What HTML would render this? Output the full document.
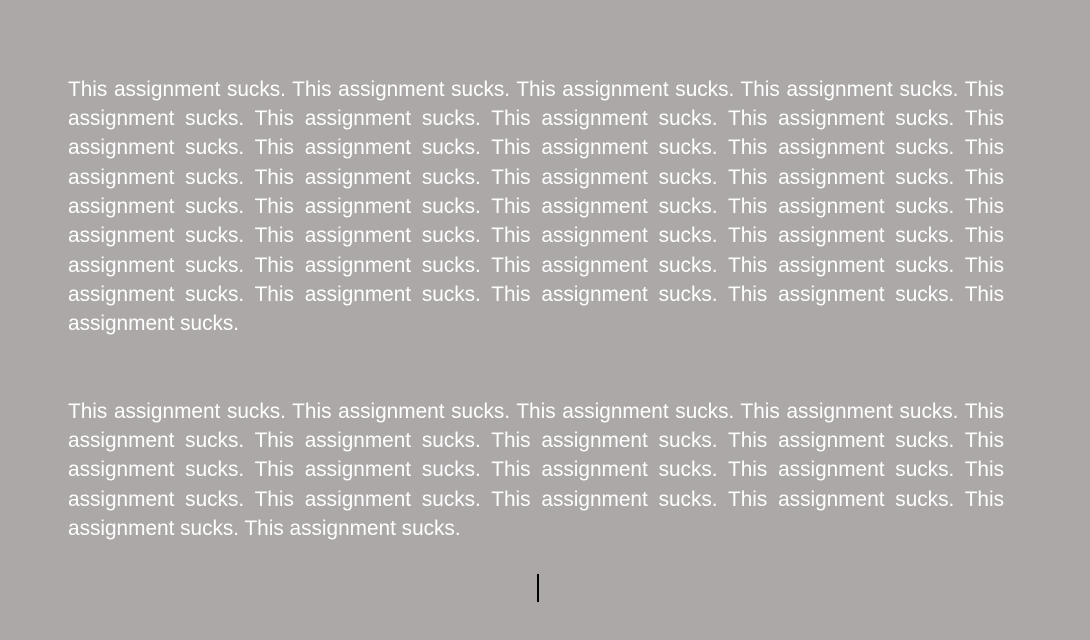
<!DOCTYPE html>
<html><head><meta charset="utf-8"><style>
html,body{margin:0;padding:0;}
body{width:1090px;height:640px;background:#aca8a7;position:relative;overflow:hidden;font-family:"Liberation Sans",sans-serif;color:#fff;font-size:20.8px;}
.l{position:absolute;left:68px;width:936px;text-align:justify;text-align-last:justify;white-space:nowrap;height:24px;line-height:24px;}
.l.e{text-align-last:left;text-align:left;}
.cur{position:absolute;left:537px;top:574px;width:1.5px;height:28px;background:#000;}
</style></head><body>
<div class="l" style="top:78px">This assignment sucks. This assignment sucks. This assignment sucks. This assignment sucks. This</div>
<div class="l" style="top:107px">assignment sucks. This assignment sucks. This assignment sucks. This assignment sucks. This</div>
<div class="l" style="top:136px">assignment sucks. This assignment sucks. This assignment sucks. This assignment sucks. This</div>
<div class="l" style="top:166px">assignment sucks. This assignment sucks. This assignment sucks. This assignment sucks. This</div>
<div class="l" style="top:195px">assignment sucks. This assignment sucks. This assignment sucks. This assignment sucks. This</div>
<div class="l" style="top:224px">assignment sucks. This assignment sucks. This assignment sucks. This assignment sucks. This</div>
<div class="l" style="top:254px">assignment sucks. This assignment sucks. This assignment sucks. This assignment sucks. This</div>
<div class="l" style="top:283px">assignment sucks. This assignment sucks. This assignment sucks. This assignment sucks. This</div>
<div class="l e" style="top:312px">assignment sucks.</div>
<div class="l" style="top:400px">This assignment sucks. This assignment sucks. This assignment sucks. This assignment sucks. This</div>
<div class="l" style="top:429px">assignment sucks. This assignment sucks. This assignment sucks. This assignment sucks. This</div>
<div class="l" style="top:458px">assignment sucks. This assignment sucks. This assignment sucks. This assignment sucks. This</div>
<div class="l" style="top:488px">assignment sucks. This assignment sucks. This assignment sucks. This assignment sucks. This</div>
<div class="l e" style="top:517px">assignment sucks. This assignment sucks.</div>
<div class="cur"></div>
</body></html>
